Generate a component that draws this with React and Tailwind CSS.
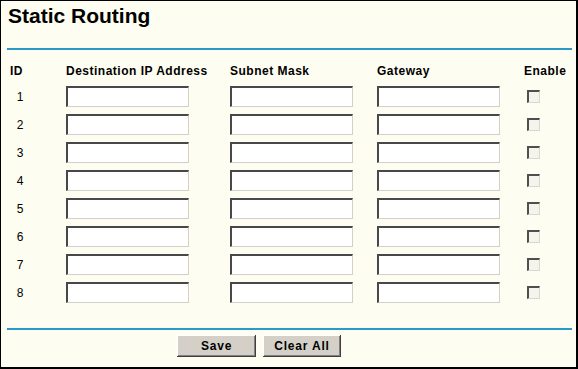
import React from 'react';

const ROWS = [1, 2, 3, 4, 5, 6, 7, 8];

function Field() {
  return (
    <input
      type="text"
      className="block w-[123px] h-[21px] bg-white border-t-2 border-l-2 border-b border-r border-t-[#484848] border-l-[#484848] border-b-[#d4d0c8] border-r-[#d4d0c8] outline-none px-1 text-[12px]"
    />
  );
}

function Button({ children, width }) {
  return (
    <button
      type="button"
      className={
        'h-[22px] bg-[#d4d0c8] text-black text-[12px] font-bold tracking-[0.8px] leading-none ' +
        'shadow-[inset_-1px_-1px_#404040,inset_1px_1px_#ffffff,inset_-2px_-2px_#808080] ' +
        width
      }
    >
      {children}
    </button>
  );
}

export default function App() {
  return (
    <div className="w-[578px] h-[369px] bg-[#fdfdf1] border-l border-t border-r-2 border-b-2 border-black text-black font-['Liberation_Sans',Arial,sans-serif] overflow-hidden">
      {/* Заголовок */}
      <div className="pt-[3px] pl-[7px] text-[21px] font-bold leading-[24px]">Static Routing</div>
      <div className="mt-[20px] ml-[6px] mr-[4px] h-[2px] bg-[#2b9ac4]" />

      {/* Шапка таблицы */}
      <div className="mt-[13px] pl-[9px] flex h-[16px] leading-[16px] text-[12px] font-bold tracking-[0.5px]">
        <div className="w-[56px]">ID</div>
        <div className="w-[164px]">Destination IP Address</div>
        <div className="w-[147px]">Subnet Mask</div>
        <div className="w-[147px]">Gateway</div>
        <div>Enable</div>
      </div>

      {/* Строки */}
      <div className="mt-[7px] pl-[9px] flex flex-col gap-[7px]">
        {ROWS.map((n) => (
          <div key={n} className="flex items-center h-[21px]">
            <div className="w-[56px] text-[12px]">
              <div className="w-[20px] text-center">{n}</div>
            </div>
            <div className="w-[164px]"><Field /></div>
            <div className="w-[147px]"><Field /></div>
            <div className="w-[147px]"><Field /></div>
            <div className="pl-[3px] flex items-center">
              <span className="block w-[13px] h-[13px] bg-[#f4f4ec] border-t-2 border-l-2 border-b border-r border-t-[#4f4f4f] border-l-[#4f4f4f] border-b-[#d8d8d0] border-r-[#d8d8d0]" />
            </div>
          </div>
        ))}
      </div>

      <div className="mt-[25px] ml-[6px] mr-[4px] h-[2px] bg-[#2b9ac4]" />

      {/* Кнопки */}
      <div className="mt-[5px] pl-[176px] flex gap-[7px]">
        <Button width="w-[79px]">Save</Button>
        <Button width="w-[78px]">Clear All</Button>
      </div>
    </div>
  );
}
